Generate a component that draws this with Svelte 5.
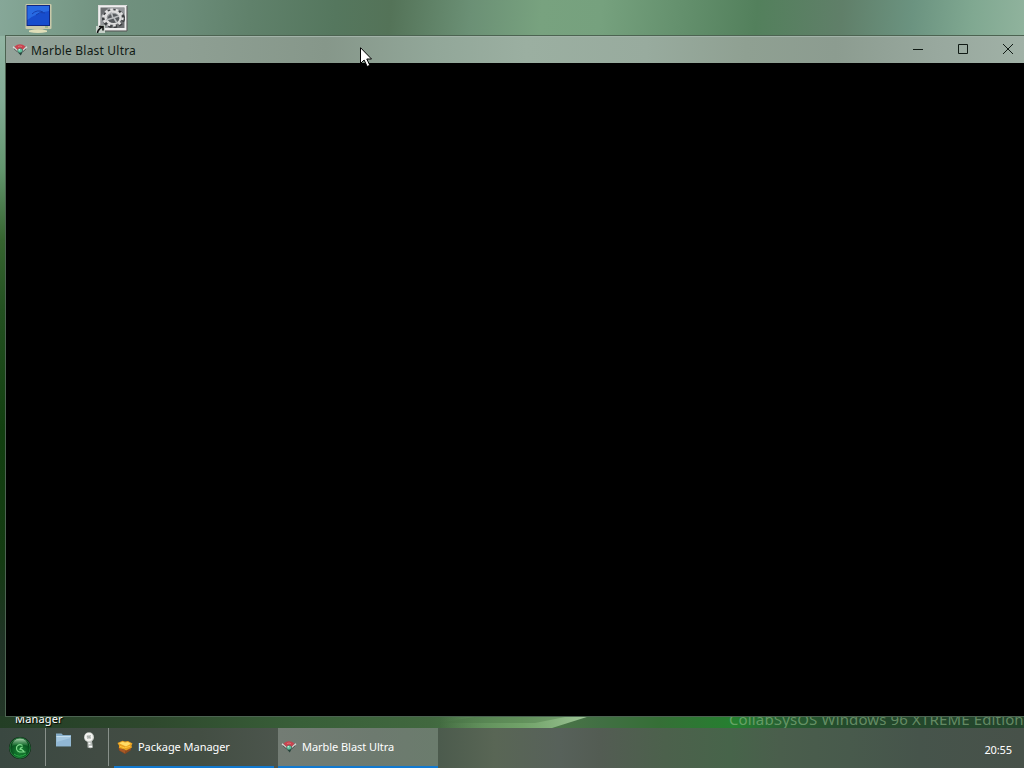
<!-- App.svelte -->
<script lang="ts">
    type Task = {
        id: string;
        title: string;
        icon: 'package' | 'marble';
    };

    const tasks: Task[] = [
        { id: 'packages', title: 'Package Manager', icon: 'package' },
        { id: 'marble', title: 'Marble Blast Ultra', icon: 'marble' }
    ];

    let activeTask = $state('marble');
    let clock = $state('20:55');
</script>

{#snippet marbleIcon()}
    <svg class="app-icon" width="16" height="16" viewBox="0 0 16 16">
        <path d="M2.5 4.5Q8 .2 13.5 4.5L10.5 8Q8 6 5.5 8Z" fill="#c84450" />
        <path d="M6 4.6Q8 3.4 10 4.6" stroke="#dc6f74" stroke-width="1" fill="none" />
        <path d="M1 4.8L5.3 8.6M15 4.8L10.7 8.6" stroke="#e0dedc" stroke-width="1.2" />
        <path d="M2 6.8L5.4 9.8M14 6.8L10.8 9.8" stroke="#3d4443" stroke-width=".8" />
        <circle cx="8.2" cy="8.8" r="2.6" fill="#3d6458" />
        <circle cx="8" cy="8.6" r="2.1" fill="#62c4a0" />
        <circle cx="7.3" cy="7.8" r=".8" fill="#dcf5e8" />
        <path d="M6.5 11L8.8 13.6L10.3 10.6Z" fill="#28443c" />
    </svg>
{/snippet}

{#snippet packageIcon()}
    <svg class="app-icon" width="16" height="16" viewBox="0 0 16 16">
        <path d="M1.5 8L8 11L14 7.5V11L8 15L2 11.5Z" fill="#8d4a20" />
        <path d="M2.5 9L8 11.3V14.3L3 11.4Z" fill="#a85a27" />
        <path d="M.5 4L5.5 1.7L8 2.6L11 2L15.5 4.5L14.5 6.5L15 8.5L9 11.5L7.3 10.5L2 9L2 6.5Z" fill="#eaa221" />
        <path d="M2 4.2L5.5 2.7L8 3.6L11 3L13.8 4.7L9 7.4Z" fill="#ffdc66" />
        <path d="M3 7.4L7.5 8.8L13 7.4" stroke="#ffc83c" fill="none" />
    </svg>
{/snippet}

<div class="desktop">
    <div class="workspace">
        <div class="shortcuts">
            <svg class="computer" width="28" height="32" viewBox="0 0 28 32">
                <rect x="1.5" y="0" width="26" height="25" rx="1" fill="#c9c9a9" />
                <rect x="2.5" y="1" width="23.5" height="21" fill="#102780" />
                <rect x="3.5" y="2" width="21.5" height="19" fill="#174dcd" />
                <path d="M3.5 2H25V7Q12 9 3.5 16Z" fill="#286ae3" />
                <path d="M8 10Q13 5 19 8M12 11Q16 7 21 9" stroke="#163fae" fill="none" />
                <rect x="21" y="22.5" width="3" height="1" fill="#77a36d" />
                <path d="M10 25H19V27H10Z" fill="#aaa782" />
                <path d="M5 26.5Q14 24 23 26.5V28Q14 30 5 28Z" fill="#e1dfb9" />
            </svg>
            <svg class="settings" width="32" height="32" viewBox="0 0 32 32">
                <rect x="2.5" y="2.5" width="28" height="25" fill="#eee" stroke="#ddd" />
                <path d="M3 28H31V3" stroke="#555" fill="none" />
                <rect x="4.5" y="4.5" width="24" height="20.5" fill="#6b6e70" />
                <path d="M5 13L12 5H28V10L13 25H5Z" fill="#94979a" />
                <ellipse cx="17.5" cy="15.5" rx="10" ry="8" fill="none" stroke="#3b3e40" stroke-width="3" stroke-dasharray="3.2 2.1" />
                <ellipse cx="17" cy="14.5" rx="7.5" ry="6" fill="none" stroke="#dedede" stroke-width="2.4" />
                <ellipse cx="17" cy="14.5" rx="9.6" ry="8" fill="none" stroke="#e2e2e2" stroke-width="2.4" stroke-dasharray="2.6 2.9" />
                <ellipse cx="17.5" cy="15.5" rx="5.8" ry="4.6" fill="#565a5d" />
                <path d="M17 15L15 9M17 15L10 17M17 15L23 13M18 15L21 20" stroke="#b9bcbe" stroke-width="1.6" />
                <path d="M0 23H5V22H9V30H0Z" fill="#c6d0c9" />
                <path d="M1.5 30Q1.5 27 6 24M3 23.5H7V27.5" stroke="#111" stroke-width="1.6" fill="none" />
            </svg>
        </div>
        <svg class="streak" width="160" height="12" viewBox="0 0 160 12">
            <defs>
                <linearGradient id="streak">
                    <stop offset="0" stop-color="#91bf83" stop-opacity="0" />
                    <stop offset=".55" stop-color="#7eb174" stop-opacity=".75" />
                    <stop offset="1" stop-color="#a1c799" />
                </linearGradient>
            </defs>
            <path d="M0 0H150L112 12H0Z" fill="url(#streak)" />
            <path d="M40 0H130L95 7H0Z" fill="#456f43" opacity=".35" />
        </svg>
        <span class="shortcut-label">Manager</span>
        <span class="watermark">CollabSysOS Windows 96 XTREME Edition</span>

        <div class="window">
            <div class="titlebar">
                {@render marbleIcon()}
                <span class="window-title">Marble Blast Ultra</span>
                <div class="controls">
                    <button aria-label="Minimize">
                        <svg width="12" height="12" viewBox="0 0 12 12"><path d="M1 6.5H11" /></svg>
                    </button>
                    <button aria-label="Maximize">
                        <svg width="12" height="12" viewBox="0 0 12 12"><path d="M1.5 1.5H10.5V10.5H1.5Z" /></svg>
                    </button>
                    <button aria-label="Close">
                        <svg width="12" height="12" viewBox="0 0 12 12"><path d="M1 1L11 11M11 1L1 11" /></svg>
                    </button>
                </div>
            </div>
            <div class="window-body"></div>
        </div>
    </div>

    <div class="taskbar">
        <button class="start" aria-label="Start">
            <svg width="24" height="24" viewBox="0 0 24 24">
                <defs>
                    <radialGradient id="orb" cx=".5" cy=".65" r=".65">
                        <stop offset="0" stop-color="#1c8a36" />
                        <stop offset=".6" stop-color="#0a5a22" />
                        <stop offset="1" stop-color="#03290e" />
                    </radialGradient>
                    <linearGradient id="gloss" x2="0" y2="1">
                        <stop offset="0" stop-color="#b4dcb8" />
                        <stop offset="1" stop-color="#2f8a45" stop-opacity=".4" />
                    </linearGradient>
                </defs>
                <circle cx="12" cy="12" r="11" fill="#08230f" />
                <circle cx="12" cy="12" r="10.2" fill="url(#orb)" stroke="#2f9a4c" stroke-width=".7" />
                <path d="M4 10Q4.5 2.5 12 2.5Q19.5 2.5 20 10Q12 6.5 4 10Z" fill="url(#gloss)" />
                <path d="M14.5 9.5Q11 7.5 8.8 10.5Q7.5 14.5 11.5 16H17.5M12 12L16 15.5M15 11Q12 11 12 14" stroke="#7fdc8c" stroke-width="1.2" fill="none" />
                <path d="M6 18Q11 22.5 18 18" stroke="#2bb247" fill="none" />
            </svg>
        </button>
        <div class="quick-launch">
            <svg width="16" height="16" viewBox="0 0 16 16">
                <path d="M1 1.5H6.5L8 3H16V14.5H1Z" fill="#86adc8" />
                <path d="M1.5 4H15.5V14H1.5Z" fill="#a4c7df" />
                <path d="M1.5 10L15.5 6V14H1.5Z" fill="#91b7d4" />
                <path d="M1.5 4.5H15.5" stroke="#c5deee" />
            </svg>
            <svg width="16" height="18" viewBox="0 0 16 18">
                <path d="M5.5 9H10L11 15.5Q8.5 17 5.5 15.5Z" fill="#b3b8b4" />
                <circle cx="7" cy="5.3" r="5" fill="#cbcfca" />
                <circle cx="6.8" cy="5" r="3.1" fill="none" stroke="#f5f5f2" stroke-width="1.7" />
                <path d="M4.8 4L9 6.2M5.2 6.2L8.7 3.5" stroke="#a5aaa7" />
                <path d="M6.5 11.5H8.5M7 14.5H10" stroke="#fff" stroke-width="1.4" />
            </svg>
        </div>
        <div class="tasks">
            {#each tasks as task (task.id)}
                <button class="task" class:active={activeTask === task.id} onclick={() => (activeTask = task.id)}>
                    {#if task.icon === 'package'}
                        {@render packageIcon()}
                    {:else}
                        {@render marbleIcon()}
                    {/if}
                    <span>{task.title}</span>
                </button>
            {/each}
        </div>
        <span class="clock">{clock}</span>
    </div>

    <svg class="cursor" width="12" height="21" viewBox="0 0 12 21">
        <path d="M.5 .7V16.5L4.1 13L7.2 19.5L9.8 18.3L6.8 12H11.5Z" fill="#fff" stroke="#000" />
    </svg>
</div>

<style>
:global(body) {
    margin: 0;
    overflow: hidden;
}

.desktop {
    position: relative;
    display: flex;
    flex-direction: column;
    width: 1024px;
    height: 768px;
    overflow: hidden;
    font-family: "Noto Sans", "Open Sans", sans-serif;
    font-size: 12px;
    color: #fff;
}

button {
    border: 0;
    padding: 0;
    background: none;
    color: inherit;
    font: inherit;
}

svg {
    display: block;
    flex: none;
}

.workspace {
    position: relative;
    flex: 1;
    overflow: hidden;
    background:
        linear-gradient(90deg, #233e25 0, #2e482d 150px, #385f38 300px, #41683f 430px, #4a7848 485px, #4a7447 560px, #416f43 600px, #356f36 660px, #258030 735px, #276132 780px, #24492c 850px, #23452c 1024px) 0 100% / 100% 12px no-repeat,
        linear-gradient(#92b5a3 0, #82ab95 64px, #63966e 134px, #36642f 204px, #235020 274px, #123f10 394px, #143b12 524px, #203326 604px, #233627 680px) 0 36px / 6px 692px no-repeat,
        linear-gradient(95deg, #86a798 0, #7d9f8d 45px, #71917f 110px, #6c8d7a 180px, #60816b 250px, #55775e 335px, #547358 390px, #6b9075 470px, #78a27f 540px, #76a17e 600px, #64906d 680px, #53805c 755px, #607f69 840px, #6b9380 910px, #80a891 970px, #90b39d 1024px) 0 0 / 100% 36px no-repeat;
}

.shortcuts {
    display: flex;
    gap: 44px;
    padding: 4px 0 0 24px;
}

.settings {
    margin-top: -1px;
}

.streak {
    position: absolute;
    left: 440px;
    bottom: 0;
}

.shortcut-label {
    position: absolute;
    left: 15px;
    bottom: 1px;
    font-size: 11px;
    line-height: 16px;
    letter-spacing: 0.15px;
    text-shadow: 1px 1px 1px #000;
}

.watermark {
    position: absolute;
    left: 729px;
    bottom: -1px;
    font-size: 15px;
    line-height: 20px;
    letter-spacing: 0.14px;
    color: rgba(157, 196, 149, 0.55);
    white-space: nowrap;
}

.window {
    position: absolute;
    left: 5px;
    top: 35px;
    display: flex;
    flex-direction: column;
    box-sizing: border-box;
    width: 1026px;
    height: 682px;
    border: 1px solid #4c6351;
}

.titlebar {
    display: flex;
    align-items: center;
    box-sizing: border-box;
    height: 27px;
    padding-left: 6px;
    color: #101a14;
    border-top: 1px solid #a2b3a8;
    background: linear-gradient(90deg, #93a299 0, #8e9f93 180px, #86978a 320px, #92a799 430px, #9bafa1 520px, #98ab9e 640px, #8fa092 740px, #8c9c90 830px, #98a89e 930px, #a1b2a7 1024px);
}

.window-title {
    margin-left: 3px;
    letter-spacing: 0.2px;
}

.controls {
    display: flex;
    margin-left: auto;
}

.controls button {
    display: flex;
    align-items: center;
    justify-content: center;
    width: 45px;
    height: 26px;
    padding-bottom: 2px;
}

.controls path {
    stroke: #101a14;
    fill: none;
}

.window-body {
    flex: 1;
    background: #000;
}

.taskbar {
    display: flex;
    flex: none;
    height: 40px;
    background: linear-gradient(90deg, #3a4841 0, #414b43 100px, #434e43 200px, #4d564e 290px, #4c5b4d 440px, #596655 495px, #57615a 560px, #535c53 600px, #4c614c 665px, #47644a 730px, #4a5e4c 780px, #485a4c 850px, #46544b 920px, #475149 1024px);
}

.start {
    display: flex;
    align-items: center;
    width: 45px;
    padding-left: 8px;
}

.quick-launch {
    display: flex;
    gap: 11px;
    box-sizing: border-box;
    width: 64px;
    height: 38px;
    padding: 4px 0 0 9px;
    border-left: 1px solid #88908a;
    border-right: 1px solid #88908a;
}

.tasks {
    display: flex;
    gap: 4px;
    padding-left: 5px;
}

.task {
    display: flex;
    align-items: center;
    box-sizing: border-box;
    width: 160px;
    height: 40px;
    padding: 0 3px 1px;
    border-bottom: 2px solid #1279cf;
    font-size: 11px;
}

.task span {
    margin-left: 5px;
    letter-spacing: -0.05px;
}

.task.active {
    background: linear-gradient(90deg, #737c74, #6d7a6f 60%, #6b7c6d);
}

.clock {
    margin-left: auto;
    padding-right: 12px;
    font-size: 11px;
    line-height: 44px;
    letter-spacing: -0.1px;
}

.cursor {
    position: absolute;
    left: 360px;
    top: 47px;
}
</style>
